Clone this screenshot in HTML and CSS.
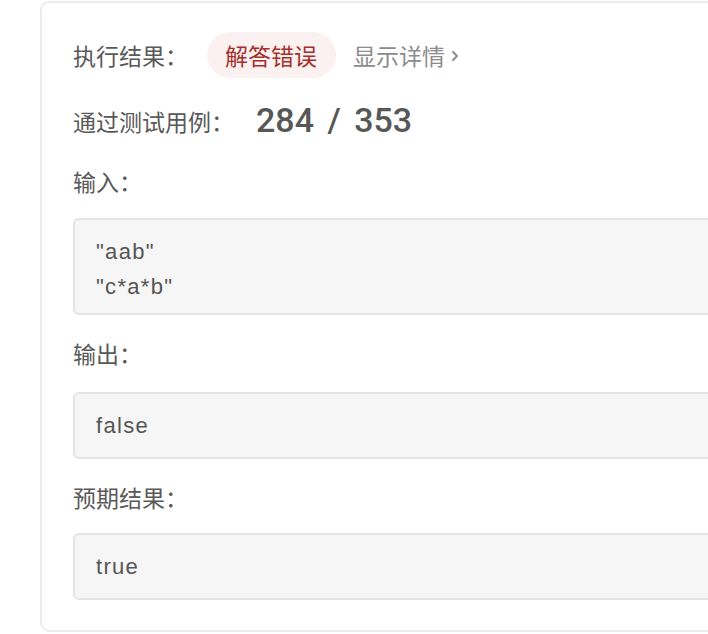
FILE: index.html
```html
<!DOCTYPE html>
<html lang="zh-CN">
<head>
<meta charset="utf-8">
<link rel="stylesheet" href="styles.css">
</head>
<body>
<div class="card">
  <div class="row row-status">
    <span class="label label-inline">执行结果：</span>
    <span class="badge">解答错误</span>
    <span class="details">显示详情<svg class="chev" width="10" height="14" viewBox="0 0 10 14"><path d="M3 3 L7 7 L3 11" fill="none" stroke="#8c8c8c" stroke-width="2" stroke-linecap="round" stroke-linejoin="round"/></svg></span>
  </div>
  <div class="row row-count">
    <span class="label label-wide">通过测试用例：</span>
    <span class="count">284 / 353</span>
  </div>
  <div class="label block-label first-label">输入：</div>
  <div class="box box-multi">
    <div class="line">"aab"</div>
    <div class="line">"c*a*b"</div>
  </div>
  <div class="label block-label label-out">输出：</div>
  <div class="box box-out">
    <div class="line">false</div>
  </div>
  <div class="label block-label label-exp">预期结果：</div>
  <div class="box box-exp">
    <div class="line">true</div>
  </div>
</div>
</body>
</html>
```
FILE: styles.css
```css
html, body {
  margin: 0;
  padding: 0;
  background: #ffffff;
  overflow: hidden;
}
body {
  width: 708px;
  height: 634px;
  font-family: "Noto Sans CJK SC", "Noto Sans", sans-serif;
  color: #5a5a5a;
}
.card {
  margin: 1px 0 0 40px;
  width: 720px;
  box-sizing: border-box;
  border: 2px solid #ececec;
  border-radius: 9px;
  padding: 29px 0 30px 31px;
  display: flex;
  flex-direction: column;
}
.row {
  display: flex;
  align-items: center;
  height: 46px;
}
.row-count {
  margin-top: 20px;
}
.label {
  font-size: 23px;
  line-height: 30px;
  color: #595959;
  white-space: nowrap;
}
.label-inline {
  margin-right: 19px;
}
.label-wide {
  margin-right: 22px;
}
.badge {
  height: 46px;
  line-height: 46px;
  padding: 0 19px 0 18px;
  border-radius: 23px;
  background: #fcf1f1;
  color: #a3302c;
  font-size: 23px;
  white-space: nowrap;
}
.details {
  margin-left: 17px;
  font-size: 23px;
  color: #8c8c8c;
  display: flex;
  align-items: center;
  white-space: nowrap;
}
.chev {
  margin-left: 5px;
  margin-top: 1px;
}
.count {
  font-family: Roboto, "Liberation Sans", sans-serif;
  font-weight: 500;
  font-size: 34px;
  line-height: 46px;
  color: #575757;
  letter-spacing: 0;
  word-spacing: 5px;
  margin-top: -2px;
}
.block-label {
  height: 30px;
}
.first-label {
  margin-top: 22px;
}
.label-out {
  margin-top: 23px;
}
.label-exp {
  margin-top: 23px;
}
.box {
  margin-top: 22px;
  border: 2px solid #e4e4e4;
  border-radius: 6px;
  background: #f6f6f6;
  padding: 14px 20px 14px 21px;
  font-family: "Liberation Sans", Arial, sans-serif;
  font-size: 22px;
  letter-spacing: 1.3px;
  color: #555555;
}
.box-multi {
  padding-bottom: 9px;
}
.box-out {
  margin-top: 24px;
}
.box-exp {
  margin-top: 21px;
}
.line {
  line-height: 35px;
  height: 35px;
  white-space: pre;
}
```
